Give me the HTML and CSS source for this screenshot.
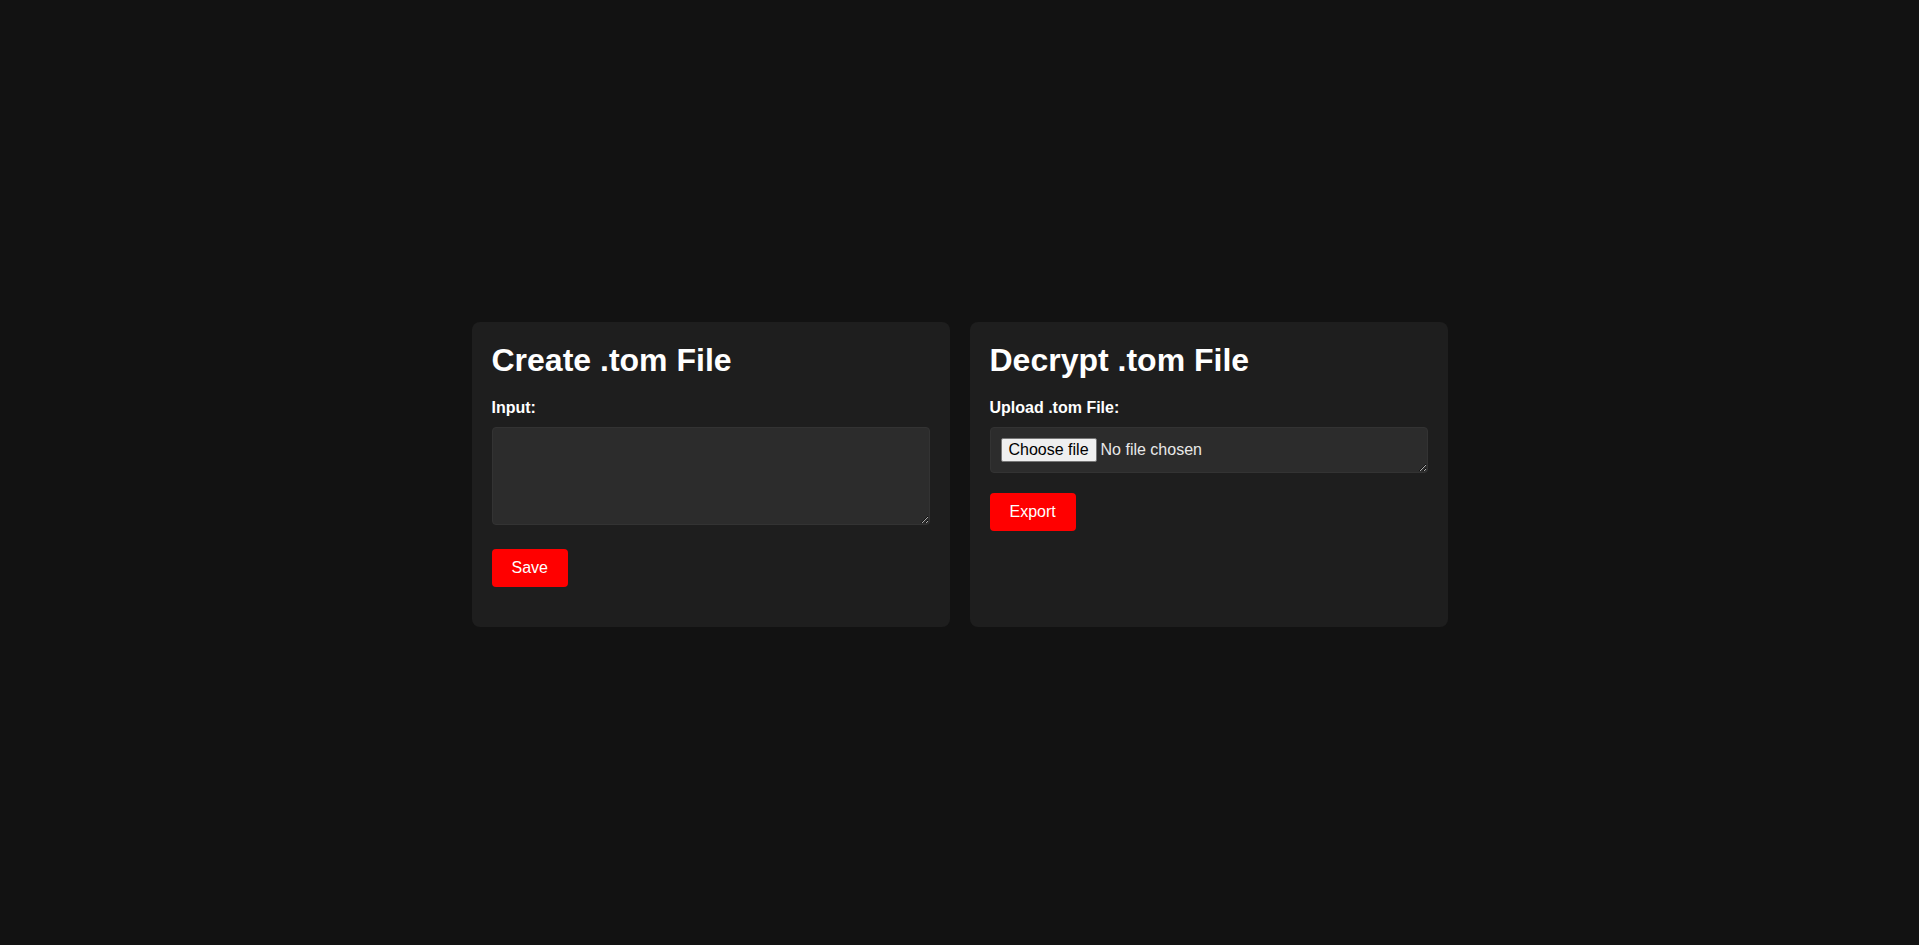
FILE: index.html
```html
<!DOCTYPE html>
<html lang="en">
<head>
<meta charset="utf-8">
<title>.tom File</title>
<link rel="stylesheet" href="styles.css">
</head>
<body>
<main class="container">
  <section class="card">
    <h1 class="card-title">Create .tom File</h1>
    <label class="field-label" for="input">Input:</label>
    <textarea id="input" class="field textarea"></textarea>
    <button class="btn">Save</button>
  </section>
  <section class="card">
    <h1 class="card-title">Decrypt .tom File</h1>
    <span class="field-label">Upload .tom File:</span>
    <div class="field file-box">
      <label class="file-btn" for="file">Choose file</label>
      <span class="file-name">No file chosen</span>
      <input id="file" type="file" class="file-hidden">
    </div>
    <button class="btn">Export</button>
  </section>
</main>
</body>
</html>
```
FILE: styles.css
```css
html, body {
  margin: 0;
  height: 100%;
}
body {
  background: #121212;
  color: #ffffff;
  font-family: "Liberation Sans", Arial, sans-serif;
  font-size: 16px;
  display: flex;
  align-items: center;
  justify-content: center;
}
.container {
  display: flex;
  gap: 20px;
  margin-top: 4px;
}
.card {
  width: 478px;
  box-sizing: border-box;
  background: #1e1e1e;
  border-radius: 8px;
  padding: 20px;
}
.card-title {
  margin: 0 0 20px;
  font-size: 32px;
  font-weight: bold;
  color: #ffffff;
}
.field-label {
  display: block;
  font-weight: bold;
  margin-bottom: 10px;
}
.field {
  width: 100%;
  box-sizing: border-box;
  background: #2c2c2c;
  border: 1px solid #333333;
  border-radius: 4px;
  color: #ffffff;
  font-family: "Liberation Sans", Arial, sans-serif;
  font-size: 16px;
  padding: 10px;
  margin-bottom: 20px;
  resize: vertical;
}
.textarea {
  height: 98px;
}
.file-box {
  display: flex;
  align-items: center;
  gap: 4px;
  height: 46px;
  overflow: auto;
}
.file-btn {
  box-sizing: border-box;
  height: 24px;
  padding: 0 7px;
  display: flex;
  align-items: center;
  background: #efefef;
  color: #000000;
  border: 1px solid #767676;
  border-radius: 2px;
  font-size: 16px;
  cursor: default;
}
.file-name {
  color: #e8e8e8;
}
.file-hidden {
  display: none;
}
.btn {
  display: block;
  background: #ff0000;
  color: #ffffff;
  border: none;
  border-radius: 4px;
  padding: 10px 20px;
  font-family: "Liberation Sans", Arial, sans-serif;
  font-size: 16px;
  margin-bottom: 20px;
  cursor: pointer;
}
```
